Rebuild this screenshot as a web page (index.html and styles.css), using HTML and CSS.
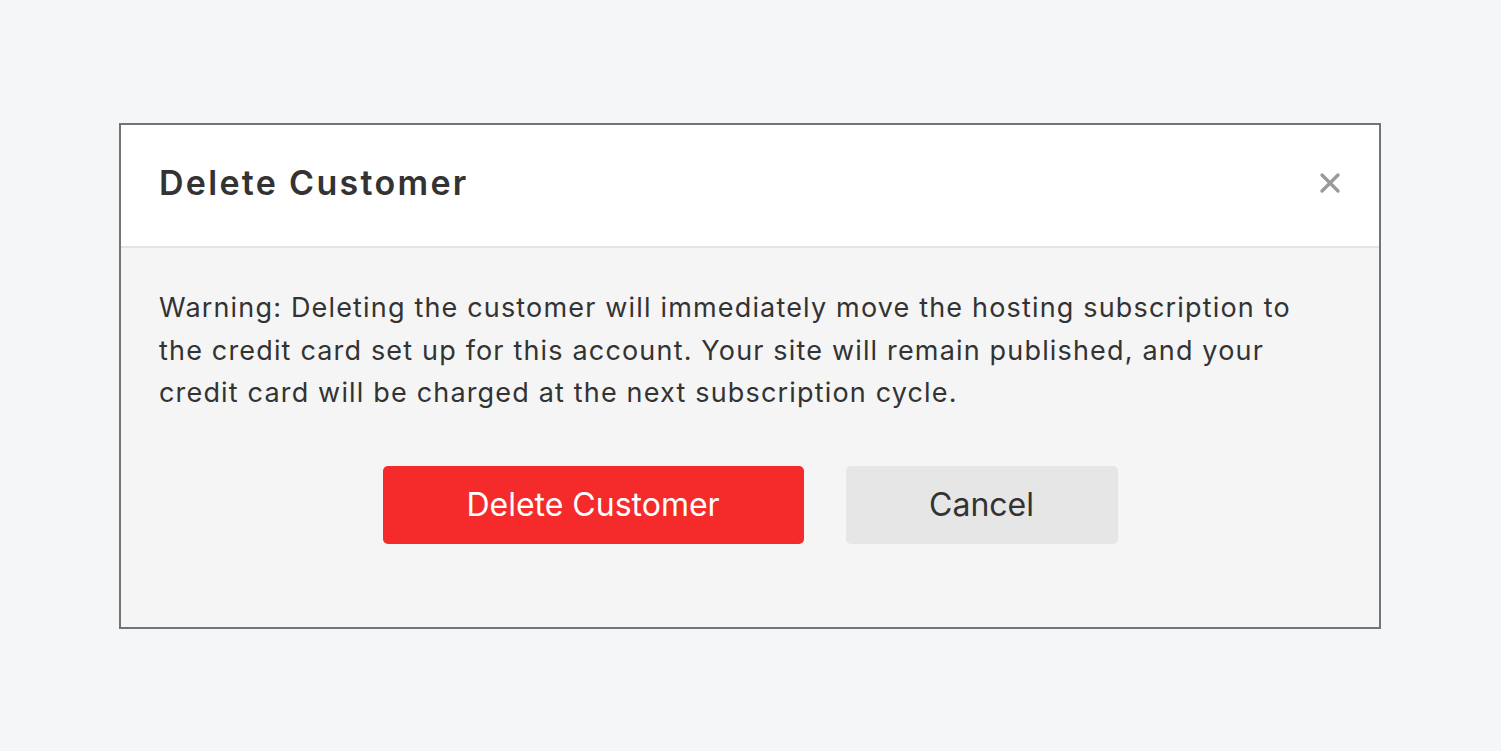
FILE: index.html
```html
<!DOCTYPE html>
<html lang="en">
<head>
    <meta charset="UTF-8">
    <title>Delete Customer</title>
    <link rel="stylesheet" href="styles.css">
</head>
<body>

    <div class="modal">
        <div class="modal-header">
            <h2>Delete Customer</h2>
            <button class="close-btn" aria-label="Close">
                <svg width="22" height="22" viewBox="0 0 22 22">
                    <path d="M3 3 L19 19 M19 3 L3 19" stroke="#9a9a9a" stroke-width="3.4" stroke-linecap="round"/>
                </svg>
            </button>
        </div>
        <div class="modal-body">
            <p>Warning: Deleting the customer will immediately move the hosting subscription to the credit card set up for this account. Your site will remain published, and your credit card will be charged at the next subscription cycle.</p>
            <div class="actions">
                <button class="btn btn-delete">Delete Customer</button>
                <button class="btn btn-cancel">Cancel</button>
            </div>
        </div>
    </div>

</body>
</html>
```

FILE: styles.css
```css
body {
    margin: 0;
    background-color: #f5f6f7;
    font-family: Inter, "Noto Sans", sans-serif;
    color: #333333;
}
.modal {
    width: 1258px;
    height: 502px;
    margin: 123px 0 0 119px;
    border: 2px solid #747474;
    background-color: #f5f5f5;
    display: flex;
    flex-direction: column;
}
.modal-header {
    height: 123px;
    box-sizing: border-box;
    background-color: #ffffff;
    border-bottom: 2px solid #e3e3e3;
    display: flex;
    align-items: center;
    justify-content: space-between;
    padding: 0 38px 6px 38px;
}
.modal-header h2 {
    margin: 0;
    font-size: 34px;
    font-weight: 600;
    color: #333333;
    letter-spacing: 2.3px;
}
.close-btn {
    background: none;
    border: none;
    padding: 0;
    cursor: pointer;
    display: flex;
}
.modal-body {
    padding: 39px 38px 0 38px;
}
.modal-body p {
    margin: 0;
    font-size: 27px;
    line-height: 42.5px;
    letter-spacing: 1.17px;
    color: #333333;
}
.actions {
    display: flex;
    justify-content: center;
    gap: 42px;
    margin-top: 51px;
}
.btn {
    height: 78px;
    border: none;
    border-radius: 5px;
    font-family: Inter, "Noto Sans", sans-serif;
    font-size: 32px;
    cursor: pointer;
}
.btn-delete {
    width: 421px;
    background-color: #f52a2b;
    color: #ffffff;
}
.btn-cancel {
    width: 272px;
    background-color: #e6e6e6;
    color: #333333;
}
```
